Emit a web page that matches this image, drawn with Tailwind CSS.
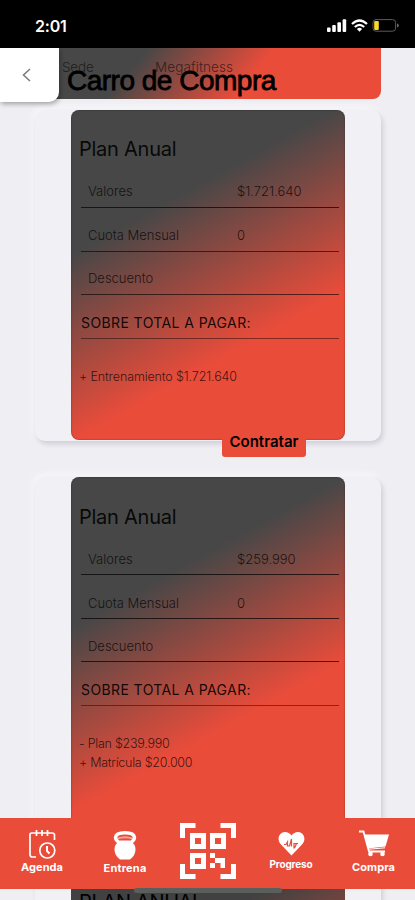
<!DOCTYPE html>
<html lang="es">
<head>
<meta charset="utf-8">
<title>Carro de Compra</title>
<script src="https://cdn.jsdelivr.net/npm/@tailwindcss/browser@4"></script>
</head>
<body class="bg-[#efeef3] overflow-hidden">
<div class="relative w-[415px] h-[900px] overflow-hidden bg-[#efeef3] font-['Inter','Liberation_Sans',sans-serif] text-black">

  <header class="relative z-10 h-[48px] bg-black flex items-center justify-between pl-[35px] pr-[16px] pt-[3px]">
    <span class="text-white text-[16px] font-semibold tracking-[-0.2px]">2:01</span>
    <div class="flex items-center gap-[4px]">
      <svg width="20" height="13" viewBox="0 0 20 13" fill="#fff"><rect x="0" y="8.5" width="3.6" height="4.5" rx="1"/><rect x="5.2" y="6" width="3.6" height="7" rx="1"/><rect x="10.4" y="3.2" width="3.6" height="9.8" rx="1"/><rect x="15.6" y="0.3" width="3.6" height="12.7" rx="1"/></svg>
      <svg width="17" height="13" viewBox="0 0 17 13" fill="none" stroke="#fff" stroke-width="2.2"><path d="M1 5 Q8.5 -2 16 5"/><path d="M3.8 8 Q8.5 3.6 13.2 8"/><path d="M5.9 10 Q8.5 7.6 11.1 10 L8.5 12.8Z" fill="#fff" stroke="none"/></svg>
      <svg width="27" height="13" viewBox="0 0 27 13"><rect x="1" y="0.6" width="22.6" height="11.6" rx="3" fill="none" stroke="#5c5c5c" stroke-width="1"/><rect x="2.2" y="1.9" width="4.6" height="9" rx="1.2" fill="#fbd928"/><path d="M25 4.4q1.8 .5 1.8 2t-1.8 2z" fill="#6a6a6a"/></svg>
    </div>
  </header>

  <main class="pl-[35px] pr-[34px]">
    <section class="h-[50.5px] rounded-b-[8px] bg-[linear-gradient(130deg,#474747_29%,#ea4c3a_62%)] flex pt-[9px] pl-[27px] text-[13.5px] font-light text-black/60">
      <span class="w-[93px] tracking-[-0.2px]">Sede</span><span class="tracking-[0.1px]">Megafitness</span>
    </section>

    <section class="mt-[11.5px] h-[331px] px-[36px] rounded-[10px] bg-[#f1f0f4] shadow-[2px_3px_5px_#cfced4,-2px_-3px_7px_#f8f8fb]">
      <div class="h-[330px] rounded-[8px] bg-[linear-gradient(151deg,#474747_30%,#ea4c3a_69%)] shadow-[inset_0_0_2px_#0006] px-[8px] text-[13px] font-light text-black/75">
        <h2 class="h-[53.5px] pt-[25px] text-[20px] leading-[28px] font-normal text-black/90 tracking-[-0.25px]">Plan Anual</h2>
        <div class="mx-[2px] mr-[-2px]">
          <div class="h-[44px] border-b border-black/70 flex items-end pb-[5px] pl-[7px]"><span class="w-[149px]">Valores</span><span>$1.721.640</span></div>
          <div class="h-[44px] border-b border-black/60 flex items-end pb-[5px] pl-[7px]"><span class="w-[149px]">Cuota Mensual</span><span>0</span></div>
          <div class="h-[43px] border-b border-black/60 flex items-end pb-[5px] pl-[7px]"><span>Descuento</span></div>
          <div class="h-[44px] border-b border-black/45 flex items-end pb-[5px] text-[14px] font-normal tracking-[0.4px] text-black/90">SOBRE TOTAL A PAGAR:</div>
        </div>
        <div class="pt-[28px] text-[12.5px] leading-[19px] tracking-[-0.12px]"><p>+ Entrenamiento $1.721.640</p></div>
      </div>
    </section>

    <div class="relative h-[36px] flex justify-start pl-[187px]">
      <button class="h-[27px] w-[84px] mt-[-11px] rounded-[3px] bg-[#ea4c3a] text-[15px] leading-[22px] pt-[1px] pb-[4px] font-semibold whitespace-nowrap">Contratar</button>
    </div>

    <section class="h-[376px] px-[36px] rounded-[10px] bg-[#f1f0f4] shadow-[2px_3px_5px_#cfced4,-2px_-3px_7px_#f8f8fb]">
      <div class="h-[350px] rounded-[8px] bg-[linear-gradient(151deg,#474747_30%,#ea4c3a_67%)] shadow-[inset_0_0_2px_#0006] px-[8px] text-[13px] font-light text-black/75">
        <h2 class="h-[54px] pt-[26px] text-[20px] leading-[28px] font-normal text-black/90 tracking-[-0.25px]">Plan Anual</h2>
        <div class="mx-[2px] mr-[-2px]">
          <div class="h-[44px] border-b border-black/70 flex items-end pb-[5px] pl-[7px]"><span class="w-[149px]">Valores</span><span>$259.990</span></div>
          <div class="h-[44px] border-b border-black/70 flex items-end pb-[5px] pl-[7px]"><span class="w-[149px]">Cuota Mensual</span><span>0</span></div>
          <div class="h-[43px] border-b border-black/70 flex items-end pb-[5px] pl-[7px]"><span>Descuento</span></div>
          <div class="h-[44px] border-b border-black/45 flex items-end pb-[5px] text-[14px] font-normal tracking-[0.4px] text-black/90">SOBRE TOTAL A PAGAR:</div>
        </div>
        <div class="pt-[28px] text-[12.5px] leading-[19px] tracking-[-0.25px]"><p>- Plan $239.990</p><p>+ Matrícula $20.000</p></div>
      </div>
    </section>

    <section class="h-[330px] px-[36px] bg-[#f1f0f4] shadow-[2px_3px_5px_#cfced4]">
      <div class="h-[330px] bg-[linear-gradient(151deg,#414141_30%,#ea4c3a_69%)] px-[8px] pt-[30px]">
        <h2 class="text-[20px] leading-[38px] tracking-[-0.3px]">PLAN ANUAL</h2>
      </div>
    </section>
  </main>

  <div class="absolute left-0 top-[48px] w-[59px] h-[54px] bg-white rounded-br-[10px] shadow-[1px_2px_5px_#0005] flex items-center pl-[22px]">
    <svg width="9" height="14" viewBox="0 0 9 14" fill="none" stroke="#7d7d7d" stroke-width="1.6"><path d="M8 1 L1.5 7 L8 13"/></svg>
  </div>
  <h1 class="absolute left-[67px] top-[63px] text-[28px] leading-[36px] font-['Liberation_Sans',Arial,sans-serif] tracking-[-0.5px] whitespace-nowrap [-webkit-text-stroke:0.8px_#000]">Carro de Compra</h1>

  <nav class="absolute left-0 top-[818px] w-[415px] h-[71px] bg-[#ea4c3a] text-white text-[11px] font-bold grid grid-cols-[84px_82px_84px_82px_83px] leading-[14px]">
    <a class="flex flex-col items-center pt-[11px]">
      <svg width="28" height="30" viewBox="0 0 28 30" fill="none" stroke="#fff" stroke-width="1.7"><path d="M8 28 H4.5 Q2 28 2 25.5 V5.5 Q2 4 4 4 H24 Q26.5 4 26.5 6 V11"/><path d="M8.5 1 V7 M14 1 V7 M19.5 1 V7"/><circle cx="19.3" cy="21.5" r="7.5"/><path d="M19 17 V22 L21.5 24.5" stroke-width="2"/></svg>
      <span class="mt-[1px] tracking-[0.1px]">Agenda</span>
    </a>
    <a class="flex flex-col items-center pt-[12px]">
      <svg width="24" height="30" viewBox="0 0 24 30" fill="#fff"><path fill="none" stroke="#fff" stroke-width="3.4" d="M6 12.500 Q2.500 10 2.500 7.500 Q3 2.800 12 2.800 T21.500 7.500 Q21.500 10 18 12.500"/><path d="M4 7.800 Q12 4.500 20 7.800 L19.500 9.500 Q12 6.800 4.500 9.500Z" opacity=".5"/><path d="M7 10.500 H17 Q22.500 14 22.500 19.500 Q22.500 25.500 17 29.500 H7 Q1.500 25.500 1.500 19.500 Q1.500 14 7 10.500Z"/></svg>
      <span class="mt-[1px] tracking-[0.2px]">Entrena</span>
    </a>
    <a class="flex flex-col items-center pt-[5px]">
      <svg width="56" height="56" viewBox="0 0 56 56" fill="none" stroke="#fff"><path stroke-width="5" d="M2.5 15 V2.5 H15.5 M40.5 2.5 H53.5 V15 M2.5 41 V53.5 H15.5 M40.5 53.5 H53.5 V41"/><path stroke-width="5" d="M12.5 12.5 H23.5 V23.5 H12.5Z M32.5 12.5 H43.5 V23.5 H32.5Z M12.5 32.5 H23.5 V43.5 H12.5Z"/><path fill="#fff" stroke="none" d="M30 30 H35 V35 H30Z M35 35 H45 V45 H40.500 V40 H35Z M30 40 H35 V45 H30Z"/></svg>
    </a>
    <a class="flex flex-col items-center pt-[13px] text-[10px]">
      <svg width="27" height="25" viewBox="0 0 27 25"><path fill="#fff" d="M13.5 24.5 L3 13.5 C-2 8 1.5 1 7 1 Q11 1 13.5 4.5 Q16 1 20 1 C25.5 1 29 8 24 13.5Z"/><path fill="none" stroke="#ea4c3a" stroke-width="1.2" d="M6 13.5 H8 L9.5 11 V15 H11.5 L13.5 8 V15.5 M16 17.5 V12.5 H18.5 L16.5 17 M18.5 12.5 H20"/></svg>
      <span class="mt-[1px] tracking-[-0.15px]">Progreso</span>
    </a>
    <a class="flex flex-col items-center pt-[11px]">
      <svg width="32" height="28" viewBox="0 0 32 28"><path fill="none" stroke="#fff" stroke-width="1.8" d="M1 2.5 H5.5 L11 22.5 H27"/><path fill="#fff" d="M6.5 5.5 H31 L27.5 17.5 L10 19.5Z"/><path fill="none" stroke="#fff" stroke-width="1" d="M10 20.3 L27 18.8"/><circle cx="12.5" cy="25" r="2.3" fill="#fff"/><circle cx="24.5" cy="25" r="2.3" fill="#fff"/></svg>
      <span class="mt-[3px] tracking-[0.1px]">Compra</span>
    </a>
  </nav>
  <div class="absolute left-[134px] top-[888px] w-[148px] h-[5px] rounded-full bg-[#5b5f5c]"></div>
</div>
</body>
</html>
